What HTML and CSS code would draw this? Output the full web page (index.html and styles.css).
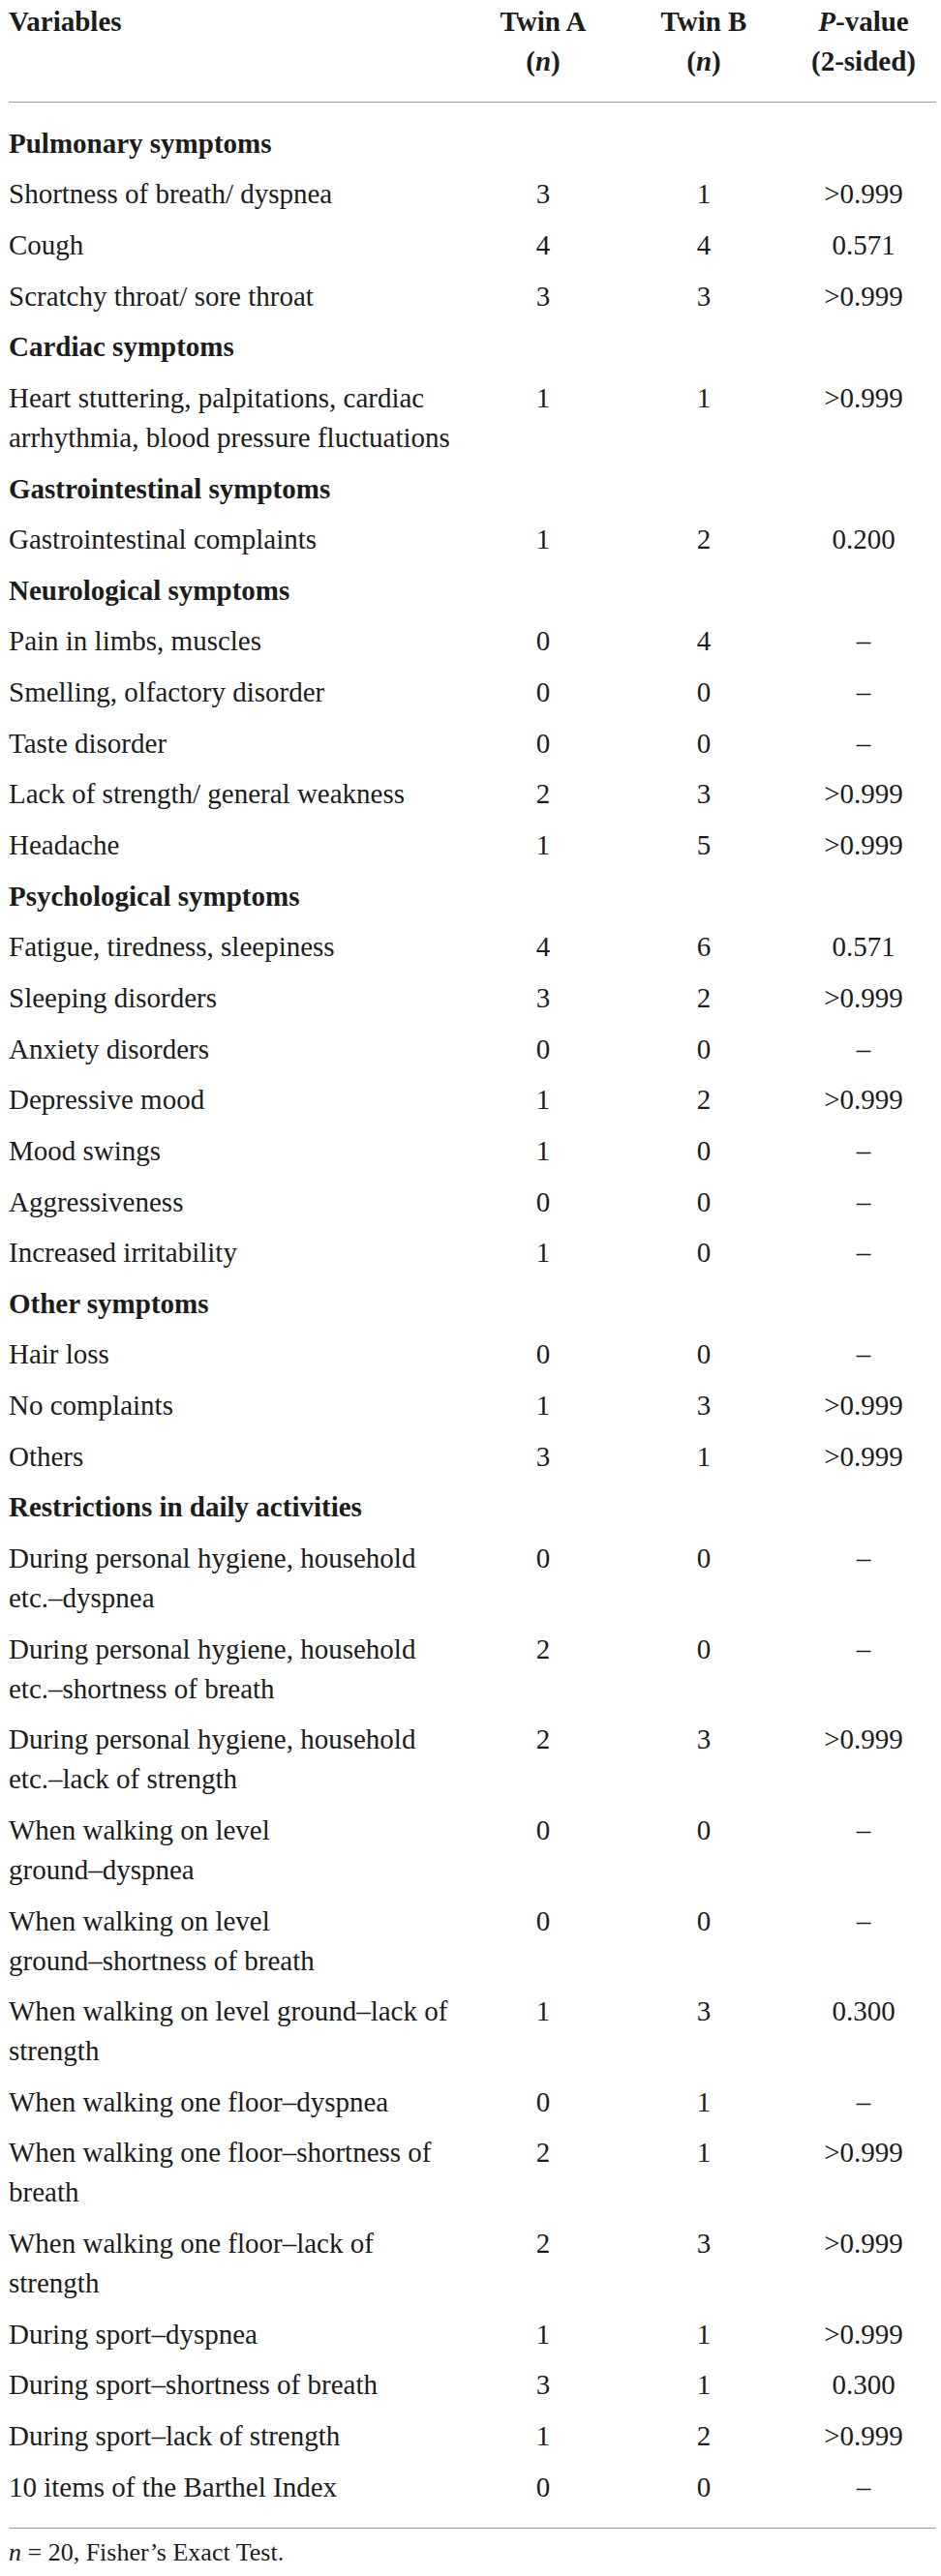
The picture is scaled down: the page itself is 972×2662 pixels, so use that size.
FILE: index.html
```html
<!DOCTYPE html>
<html lang="en">
<head>
<meta charset="utf-8">
<title>Symptoms table</title>
<link rel="stylesheet" href="styles.css">
</head>
<body>
<div class="wrap">
<table class="tbl">
  <colgroup>
    <col class="c-var">
    <col class="c-a">
    <col class="c-b">
    <col class="c-p">
  </colgroup>
  <thead>
    <tr>
      <th class="var">Variables</th>
      <th>Twin A<br>(<i>n</i>)</th>
      <th>Twin B<br>(<i>n</i>)</th>
      <th><i>P</i>-value<br>(2-sided)</th>
    </tr>
  </thead>
  <tbody>
    <tr class="first"><td class="group" colspan="4">Pulmonary symptoms</td></tr>
    <tr><td>Shortness of breath/ dyspnea</td><td>3</td><td>1</td><td>&gt;0.999</td></tr>
    <tr><td>Cough</td><td>4</td><td>4</td><td>0.571</td></tr>
    <tr><td>Scratchy throat/ sore throat</td><td>3</td><td>3</td><td>&gt;0.999</td></tr>
    <tr><td class="group" colspan="4">Cardiac symptoms</td></tr>
    <tr><td>Heart stuttering, palpitations, cardiac<br>arrhythmia, blood pressure fluctuations</td><td>1</td><td>1</td><td>&gt;0.999</td></tr>
    <tr><td class="group" colspan="4">Gastrointestinal symptoms</td></tr>
    <tr><td>Gastrointestinal complaints</td><td>1</td><td>2</td><td>0.200</td></tr>
    <tr><td class="group" colspan="4">Neurological symptoms</td></tr>
    <tr><td>Pain in limbs, muscles</td><td>0</td><td>4</td><td>–</td></tr>
    <tr><td>Smelling, olfactory disorder</td><td>0</td><td>0</td><td>–</td></tr>
    <tr><td>Taste disorder</td><td>0</td><td>0</td><td>–</td></tr>
    <tr><td>Lack of strength/ general weakness</td><td>2</td><td>3</td><td>&gt;0.999</td></tr>
    <tr><td>Headache</td><td>1</td><td>5</td><td>&gt;0.999</td></tr>
    <tr><td class="group" colspan="4">Psychological symptoms</td></tr>
    <tr><td>Fatigue, tiredness, sleepiness</td><td>4</td><td>6</td><td>0.571</td></tr>
    <tr><td>Sleeping disorders</td><td>3</td><td>2</td><td>&gt;0.999</td></tr>
    <tr><td>Anxiety disorders</td><td>0</td><td>0</td><td>–</td></tr>
    <tr><td>Depressive mood</td><td>1</td><td>2</td><td>&gt;0.999</td></tr>
    <tr><td>Mood swings</td><td>1</td><td>0</td><td>–</td></tr>
    <tr><td>Aggressiveness</td><td>0</td><td>0</td><td>–</td></tr>
    <tr><td>Increased irritability</td><td>1</td><td>0</td><td>–</td></tr>
    <tr><td class="group" colspan="4">Other symptoms</td></tr>
    <tr><td>Hair loss</td><td>0</td><td>0</td><td>–</td></tr>
    <tr><td>No complaints</td><td>1</td><td>3</td><td>&gt;0.999</td></tr>
    <tr><td>Others</td><td>3</td><td>1</td><td>&gt;0.999</td></tr>
    <tr><td class="group" colspan="4">Restrictions in daily activities</td></tr>
    <tr><td>During personal hygiene, household<br>etc.–dyspnea</td><td>0</td><td>0</td><td>–</td></tr>
    <tr><td>During personal hygiene, household<br>etc.–shortness of breath</td><td>2</td><td>0</td><td>–</td></tr>
    <tr><td>During personal hygiene, household<br>etc.–lack of strength</td><td>2</td><td>3</td><td>&gt;0.999</td></tr>
    <tr><td>When walking on level<br>ground–dyspnea</td><td>0</td><td>0</td><td>–</td></tr>
    <tr><td>When walking on level<br>ground–shortness of breath</td><td>0</td><td>0</td><td>–</td></tr>
    <tr><td>When walking on level ground–lack of<br>strength</td><td>1</td><td>3</td><td>0.300</td></tr>
    <tr><td>When walking one floor–dyspnea</td><td>0</td><td>1</td><td>–</td></tr>
    <tr><td>When walking one floor–shortness of<br>breath</td><td>2</td><td>1</td><td>&gt;0.999</td></tr>
    <tr><td>When walking one floor–lack of<br>strength</td><td>2</td><td>3</td><td>&gt;0.999</td></tr>
    <tr><td>During sport–dyspnea</td><td>1</td><td>1</td><td>&gt;0.999</td></tr>
    <tr><td>During sport–shortness of breath</td><td>3</td><td>1</td><td>0.300</td></tr>
    <tr><td>During sport–lack of strength</td><td>1</td><td>2</td><td>&gt;0.999</td></tr>
    <tr class="last"><td>10 items of the Barthel Index</td><td>0</td><td>0</td><td>–</td></tr>
  </tbody>
</table>
<p class="note"><i>n</i> = 20, Fisher’s Exact Test.</p>
</div>
</body>
</html>
```

FILE: styles.css
```css
html, body {
  margin: 0;
  padding: 0;
  background: #ffffff;
}

body {
  font-family: "Liberation Serif", "Times New Roman", serif;
  color: #1c1c1c;
}

.wrap {
  padding: 2px 5px 0 9px;
}

.tbl {
  width: 958px;
  border-collapse: collapse;
  table-layout: fixed;
  font-size: 29px;
  line-height: 41px;
}

.c-var { width: 476px; }
.c-a { width: 152px; }
.c-b { width: 180px; }
.c-p { width: 150px; }

.tbl th {
  font-weight: bold;
  text-align: center;
  vertical-align: top;
  padding: 0 0 21px 0;
  border-bottom: 1px solid #9a9a9a;
}

.tbl th.var {
  text-align: left;
}

.tbl th i {
  font-style: italic;
}

.tbl td {
  padding: 5.8px 0 5.85px 0;
  text-align: center;
  vertical-align: top;
  white-space: nowrap;
}

.tbl td:first-child {
  text-align: left;
}

.tbl td.group {
  font-weight: bold;
  text-align: left;
  margin-left: -2px;
}

.tbl tr.first td {
  padding-top: 21.7px;
}

.tbl tr.last td {
  padding-bottom: 21.7px;
  border-bottom: 1px solid #9a9a9a;
}

.note {
  margin: 10px 0 0 0;
  font-size: 26px;
  line-height: 30px;
}
```
